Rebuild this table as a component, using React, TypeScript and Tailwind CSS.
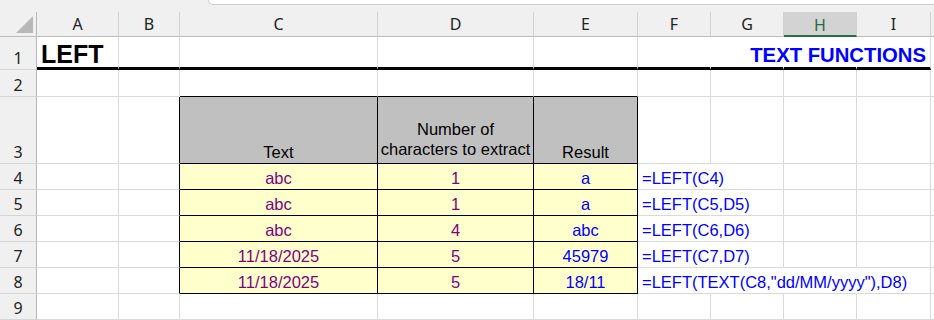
import React from 'react';

// column widths: row header, A..I, then the rest of the window
const W = {
  hdr: 'w-[37px]',
  A: 'w-[82px]',
  B: 'w-[61px]',
  C: 'w-[198px]',
  D: 'w-[156px]',
  E: 'w-[104px]',
  F: 'w-[73px]',
  G: 'w-[73px]',
  H: 'w-[73px]',
  I: 'w-[74px]',
};

const rG = 'border-r-[#dadada]';
const rK = 'border-r-black';
const rN = 'border-r-transparent';
const bG = 'border-b-[#dadada]';
const bK = 'border-b-black';

const cellFont = "font-['Liberation_Sans',Arial,sans-serif]";
const hdrFont = "font-['Noto_Sans','Open_Sans',sans-serif]";

interface CellProps {
  w: string;
  r?: string;
  b?: string;
  bw?: string;
  className?: string;
  children?: React.ReactNode;
}

const Cell: React.FC<CellProps> = ({ w, r = rG, b = bG, bw = 'border-b', className = '', children }) => (
  <div className={`${w} shrink-0 h-full border-r ${bw} ${r} ${b} flex items-end ${className}`}>
    {children}
  </div>
);

const RowNum: React.FC<{ n: number }> = ({ n }) => (
  <div
    className={`${W.hdr} shrink-0 h-full bg-[#f0f0f0] border-r border-b border-r-[#b9b9b9] border-b-[#d6d6d6] flex items-end justify-center pb-[3px] ${hdrFont} text-[16px] leading-none text-[#222]`}
  >
    {n}
  </div>
);

interface DataRow {
  n: number;
  text: string;
  count: string;
  result: string;
  formula: string;
  hide: number; // how many grid lines right of F the formula covers
}

const rows: DataRow[] = [
  { n: 4, text: 'abc', count: '1', result: 'a', formula: '=LEFT(C4)', hide: 1 },
  { n: 5, text: 'abc', count: '1', result: 'a', formula: '=LEFT(C5,D5)', hide: 1 },
  { n: 6, text: 'abc', count: '4', result: 'abc', formula: '=LEFT(C6,D6)', hide: 1 },
  { n: 7, text: '11/18/2025', count: '5', result: '45979', formula: '=LEFT(C7,D7)', hide: 1 },
  { n: 8, text: '11/18/2025', count: '5', result: '18/11', formula: '=LEFT(TEXT(C8,"dd/MM/yyyy"),D8)', hide: 3 },
];

const ColHeader: React.FC<{ w: string; label: string; selected?: boolean }> = ({ w, label, selected }) => (
  <div
    className={`${w} shrink-0 h-full border-r border-r-[#d2d2d2] flex items-center justify-center ${hdrFont} text-[16px] leading-none ${
      selected ? 'bg-[#d3d3d3] text-[#1e6e42] border-b-2 border-b-[#217346] pt-[2px]' : 'text-[#222] border-b border-b-[#bdbdbd]'
    }`}
  >
    {label}
  </div>
);

export default function App() {
  return (
    <div className="w-[934px] h-[320px] overflow-hidden bg-white flex flex-col">
      {/* top strip */}
      <div className="h-[12px] shrink-0 bg-[#f0f0f0] flex">
        <div className="w-[208px] shrink-0" />
        <div className="flex-1 h-[5px] bg-white border-l border-b border-[#cfcfcf] rounded-bl-[5px]" />
      </div>

      {/* column headers */}
      <div className="h-[25px] shrink-0 flex bg-[#f0f0f0]">
        <div className={`${W.hdr} shrink-0 h-full border-r border-b border-r-[#b9b9b9] border-b-[#bdbdbd] relative`}>
          <svg className="absolute left-[16px] top-[4px]" width="17" height="17" viewBox="0 0 17 17">
            <polygon points="17,0 17,17 0,17" fill="#b8b8b8" />
          </svg>
        </div>
        <ColHeader w={W.A} label="A" />
        <ColHeader w={W.B} label="B" />
        <ColHeader w={W.C} label="C" />
        <ColHeader w={W.D} label="D" />
        <ColHeader w={W.E} label="E" />
        <ColHeader w={W.F} label="F" />
        <ColHeader w={W.G} label="G" />
        <ColHeader w={W.H} label="H" selected />
        <ColHeader w={W.I} label="I" />
        <div className="flex-1 h-full border-b border-b-[#bdbdbd]" />
      </div>

      {/* row 1 */}
      <div className={`h-[33px] shrink-0 flex ${cellFont}`}>
        <RowNum n={1} />
        <Cell w={W.A} b={bK} bw="border-b-[3px]" className="pl-[4px] overflow-visible">
          <span className="text-[25px] font-bold leading-none whitespace-nowrap text-black">LEFT</span>
        </Cell>
        <Cell w={W.B} b={bK} bw="border-b-[3px]" />
        <Cell w={W.C} b={bK} bw="border-b-[3px]" />
        <Cell w={W.D} b={bK} bw="border-b-[3px]" />
        <Cell w={W.E} b={bK} bw="border-b-[3px]" />
        <Cell w={W.F} r={rN} b={bK} bw="border-b-[3px]" />
        <Cell w={W.G} r={rN} b={bK} bw="border-b-[3px]" />
        <Cell w={W.H} r={rN} b={bK} bw="border-b-[3px]" />
        <Cell w={W.I} b={bK} bw="border-b-[3px]" className="justify-end pr-[4px] pb-[2px]">
          <span className="text-[20.3px] font-bold leading-none whitespace-nowrap text-[#0000ff]">TEXT FUNCTIONS</span>
        </Cell>
        <div className="flex-1 h-full" />
      </div>

      {/* row 2 */}
      <div className="h-[27px] shrink-0 flex">
        <RowNum n={2} />
        <Cell w={W.A} />
        <Cell w={W.B} />
        <Cell w={W.C} b={bK} />
        <Cell w={W.D} b={bK} />
        <Cell w={W.E} b={bK} />
        <Cell w={W.F} />
        <Cell w={W.G} />
        <Cell w={W.H} />
        <Cell w={W.I} />
        <div className="flex-1 h-full border-b border-b-[#dadada]" />
      </div>

      {/* row 3: table header */}
      <div className={`h-[67px] shrink-0 flex ${cellFont} text-[16.5px] text-black`}>
        <RowNum n={3} />
        <Cell w={W.A} />
        <Cell w={W.B} r={rK} />
        <Cell w={W.C} r={rK} b={bK} className="bg-[#c0c0c0] justify-center pb-[3px]">
          <span className="leading-none">Text</span>
        </Cell>
        <Cell w={W.D} r={rK} b={bK} className="bg-[#c0c0c0] justify-center pb-[4px]">
          <div className="text-center leading-[20px] whitespace-nowrap">
            Number of
            <br />
            characters to extract
          </div>
        </Cell>
        <Cell w={W.E} r={rK} b={bK} className="bg-[#c0c0c0] justify-center pb-[3px]">
          <span className="leading-none">Result</span>
        </Cell>
        <Cell w={W.F} />
        <Cell w={W.G} />
        <Cell w={W.H} />
        <Cell w={W.I} />
        <div className="flex-1 h-full border-b border-b-[#dadada]" />
      </div>

      {/* rows 4-8 */}
      {rows.map((row) => (
        <div key={row.n} className={`h-[26px] shrink-0 flex ${cellFont} text-[16.5px] leading-none`}>
          <RowNum n={row.n} />
          <Cell w={W.A} />
          <Cell w={W.B} r={rK} />
          <Cell w={W.C} r={rK} b={bK} className="bg-[#ffffcc] justify-center pb-[3px] text-[#800080]">
            {row.text}
          </Cell>
          <Cell w={W.D} r={rK} b={bK} className="bg-[#ffffcc] justify-center pb-[3px] text-[#800080]">
            {row.count}
          </Cell>
          <Cell w={W.E} r={rK} b={bK} className="bg-[#ffffcc] justify-center pb-[3px] text-[#0000ff]">
            {row.result}
          </Cell>
          <Cell w={W.F} r={row.hide >= 1 ? rN : rG} className="pl-[4px] pb-[3px] text-[#0000ff] whitespace-nowrap overflow-visible">
            {row.formula}
          </Cell>
          <Cell w={W.G} r={row.hide >= 2 ? rN : rG} />
          <Cell w={W.H} r={row.hide >= 3 ? rN : rG} />
          <Cell w={W.I} />
          <div className="flex-1 h-full border-b border-b-[#dadada]" />
        </div>
      ))}

      {/* row 9 */}
      <div className="h-[26px] shrink-0 flex">
        <RowNum n={9} />
        <Cell w={W.A} />
        <Cell w={W.B} />
        <Cell w={W.C} />
        <Cell w={W.D} />
        <Cell w={W.E} />
        <Cell w={W.F} />
        <Cell w={W.G} />
        <Cell w={W.H} />
        <Cell w={W.I} />
        <div className="flex-1 h-full border-b border-b-[#dadada]" />
      </div>
    </div>
  );
}
